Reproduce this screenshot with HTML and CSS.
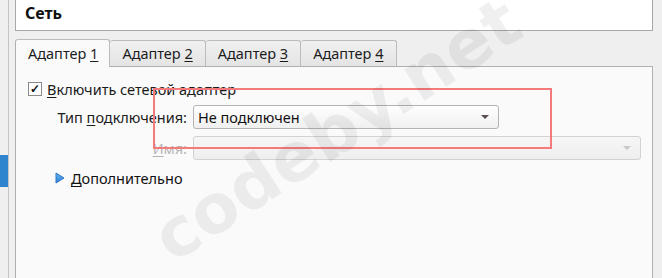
FILE: index.html
```html
<!DOCTYPE html>
<html lang="ru">
<head>
    <meta charset="UTF-8">
    <title>Сеть</title>
    <link rel="stylesheet" href="styles.css">
</head>
<body>
    <div class="window">
        <!-- левая полоса -->
        <div class="side">
            <div class="side-mark"></div>
        </div>

        <div class="main">
            <div class="header">Сеть</div>

            <!-- вкладки адаптеров -->
            <div class="tabs">
                <div class="tab active">Адаптер <u>1</u></div>
                <div class="tab">Адаптер <u>2</u></div>
                <div class="tab">Адаптер <u>3</u></div>
                <div class="tab">Адаптер <u>4</u></div>
            </div>

            <div class="panel">
                <label class="check-row">
                    <span class="checkbox">&#10003;</span>
                    <span><u>В</u>ключить сетевой адаптер</span>
                </label>

                <div class="form">
                    <div class="label">Тип <u>п</u>одключения:</div>
                    <div class="select">
                        <span>Не подключен</span>
                        <span class="arrow"></span>
                    </div>

                    <div class="label disabled"><u>И</u>мя:</div>
                    <div class="select wide off">
                        <span></span>
                        <span class="arrow"></span>
                    </div>
                </div>

                <div class="more">
                    <svg width="10" height="12" viewBox="0 0 10 12">
                        <defs>
                            <linearGradient id="tri" x1="0" y1="0" x2="0" y2="1">
                                <stop offset="0" stop-color="#6bb6f0"/>
                                <stop offset="1" stop-color="#2a7fd4"/>
                            </linearGradient>
                        </defs>
                        <path d="M1 1 L9 6 L1 11 Z" fill="url(#tri)" stroke="#2a78c8" stroke-width="1" stroke-linejoin="round"/>
                    </svg>
                    <span><u>Д</u>ополнительно</span>
                </div>
            </div>
        </div>
    </div>

    <!-- выделение и водяной знак поверх -->
    <div class="highlight"></div>
    <div class="watermark">codeby.net</div>
</body>
</html>
```

FILE: styles.css
```css
html {
    overflow: hidden;
}

body {
    margin: 0;
    background: #efefef;
    font-family: 'Noto Sans', 'Open Sans', sans-serif;
    font-size: 14.5px;
    color: #1c1c1c;
    overflow: hidden;
    height: 278px;
    position: relative;
}

u {
    text-decoration: underline;
    text-underline-offset: 2px;
}

.window {
    display: flex;
    height: 278px;
}

.side {
    width: 8px;
    border-right: 1px solid #c4c4c4;
    margin-right: 6px;
    padding-top: 155px;
}

.side-mark {
    height: 32px;
    background: #2f86cf;
}

.main {
    width: 638px;
    display: flex;
    flex-direction: column;
}

.header {
    height: 31px;
    box-sizing: border-box;
    background: #ffffff;
    border: 1px solid #a8a8a8;
    border-top: none;
    padding: 2px 0 0 9px;
    font-size: 16px;
    font-weight: bold;
    color: #111;
}

.tabs {
    display: flex;
    margin-top: 8px;
}

.tab {
    box-sizing: border-box;
    padding: 2px 12px 0 12px;
    border: 1px solid #bcbcbc;
    border-bottom: none;
    border-left: none;
    border-radius: 3px 3px 0 0;
    background: linear-gradient(#f0f0f0, #e4e4e4);
    margin-top: 1px;
    height: 26px;
}

.tab.active {
    background: #fafafa;
    border-left: 1px solid #b0b0b0;
    margin-top: 0;
    height: 28px;
    margin-bottom: -1px;
    position: relative;
    z-index: 1;
    padding: 3px 11px 0 12px;
}

.panel {
    flex: 1;
    background: #fafafa;
    border: 1px solid #b0b0b0;
    border-bottom: none;
    padding: 12px 10px 0 12px;
}

.check-row {
    display: flex;
    align-items: center;
    gap: 5px;
    height: 20px;
}

.checkbox {
    width: 12px;
    height: 12px;
    border: 1px solid #8a8a8a;
    background: #fff;
    font-size: 12px;
    line-height: 12px;
    text-align: center;
    color: #111;
    font-weight: bold;
}

.form {
    display: grid;
    grid-template-columns: 159px auto;
    column-gap: 6px;
    row-gap: 7px;
    margin-top: 6px;
    align-items: center;
    justify-items: start;
}

.label {
    justify-self: end;
}

.label.disabled {
    color: #b4b4b4;
}

.select {
    width: 306px;
    height: 24px;
    box-sizing: border-box;
    border: 1px solid #b4b4b4;
    border-radius: 3px;
    background: linear-gradient(#ffffff, #f0f0f0);
    display: flex;
    align-items: center;
    justify-content: space-between;
    padding: 0 9px 0 4px;
    font-size: 14.5px;
    color: #111;
}

.select.wide {
    width: 448px;
}

.select.off {
    border-color: #d2d2d2;
    background: linear-gradient(#f6f6f6, #efefef);
}

.arrow {
    width: 0;
    height: 0;
    border-left: 4px solid transparent;
    border-right: 4px solid transparent;
    border-top: 4px solid #5a4e4e;
}

.select.off .arrow {
    border-top-color: #c8c8c8;
}

.more {
    display: flex;
    align-items: center;
    gap: 6px;
    margin: 8px 0 0 27px;
    color: #111;
}

.highlight {
    position: absolute;
    left: 153px;
    top: 88px;
    width: 395px;
    height: 57px;
    border: 2px solid #f57a7a;
    pointer-events: none;
}

.watermark {
    position: absolute;
    left: 126px;
    top: 90px;
    font-family: 'DejaVu Sans', sans-serif;
    font-weight: bold;
    font-size: 68px;
    color: rgba(0, 0, 0, 0.06);
    transform: rotate(-33deg);
    transform-origin: center;
    white-space: nowrap;
    pointer-events: none;
}
```
